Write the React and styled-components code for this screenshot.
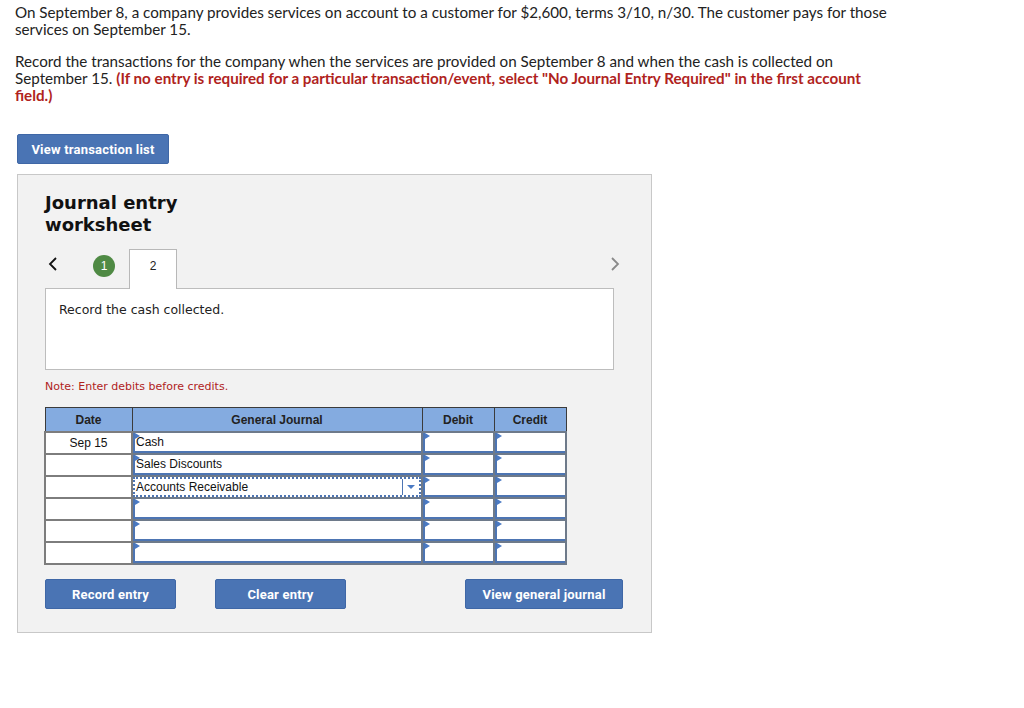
import React from 'react'
import styled, { createGlobalStyle } from 'styled-components'

const GlobalStyle = createGlobalStyle`
body {
    margin: 0;
    background: #fff;
}
`

const Page = styled.div`
padding: 4px 15px 40px 15px;
font-family: "Lato", "Liberation Sans", sans-serif;
color: #222;
`

const Intro = styled.p`
margin: 0 0 15px 0;
width: 880px;
font-size: 15.2px;
line-height: 17px;
`

const Warn = styled.strong`
color: #b0231d;
`

const BlueButton = styled.button`
height: 30px;
width: ${(props) => props.w}px;
padding: 0;
border: 1px solid #3f67a6;
border-radius: 2px;
background-color: #4a74b4;
color: #fff;
font-family: "Roboto", "Liberation Sans", sans-serif;
font-weight: 700;
font-size: 13px;
letter-spacing: 0.2px;
cursor: pointer;
`

const TopButton = styled(BlueButton)`
margin: 15px 0 0 2px;
`

const Panel = styled.div`
margin: 10px 0 0 2px;
width: 606px;
padding: 17px 0 23px 27px;
background: #f2f2f2;
border: 1px solid #c8c8c8;
`

const Title = styled.h2`
margin: 0 0 13px 0;
font-family: "DejaVu Sans", Verdana, sans-serif;
font-weight: 700;
font-size: 18px;
line-height: 22px;
color: #111;
`

const NavRow = styled.div`
display: flex;
align-items: flex-start;
width: 578px;
height: 39px;
`

const Arrow = styled.button`
border: none;
background: none;
padding: 0;
width: 16px;
height: 30px;
display: flex;
align-items: center;
justify-content: center;
cursor: pointer;
`

const Steps = styled.div`
flex: 1;
display: flex;
align-items: flex-start;
margin-left: 32px;
`

const StepDone = styled.div`
width: 22px;
height: 22px;
margin-top: 6px;
border-radius: 50%;
background: #4f8a44;
color: #fff;
font-family: "Liberation Sans", sans-serif;
font-size: 12px;
display: flex;
align-items: center;
justify-content: center;
`

const StepTab = styled.div`
margin-left: 14px;
width: 48px;
height: 40px;
background: #fff;
border: 1px solid #b8b8b8;
border-bottom: none;
font-family: "Liberation Sans", sans-serif;
font-size: 12px;
color: #222;
display: flex;
justify-content: center;
padding-top: 9px;
box-sizing: border-box;
position: relative;
z-index: 1;
`

const Prompt = styled.div`
width: 567px;
height: 80px;
box-sizing: content-box;
background: #fff;
border: 1px solid #bdbdbd;
padding: 0;
`

const PromptText = styled.p`
margin: 13px 0 0 13px;
font-family: "DejaVu Sans", Verdana, sans-serif;
font-size: 12.5px;
color: #222;
`

const Note = styled.p`
margin: 9px 0 12px 0;
font-family: "DejaVu Sans", Verdana, sans-serif;
font-size: 11px;
line-height: 16px;
color: #b0231d;
`

const Table = styled.table`
border-collapse: collapse;
margin-left: -1px;
font-family: "Liberation Sans", Arial, sans-serif;
font-size: 12px;
color: #111;
`

const Head = styled.th`
width: ${(props) => props.w}px;
height: 23px;
padding: 0;
background: #84abe0;
border: 1px solid #3b3b3b;
font-weight: 700;
font-size: 12px;
color: #222;
`

const DateCell = styled.td`
height: 20px;
padding: 0;
background: #fff;
border: 2px solid #7d7d7d;
text-align: center;
`

const FieldCell = styled.td`
height: 20px;
padding: 0;
border: 2px solid #6e7a8a;
background: #fff;
`

const Field = styled.div`
position: relative;
height: 18px;
display: flex;
align-items: center;
background: #fff;
border-left: 2px solid #4d75b3;
border-bottom: 2px solid #4d75b3;
padding-left: 1px;
${(props) => props.active && `
    border: 2px dotted #4d75b3;
    height: 16px;
`}
`

const Flag = styled.span`
position: absolute;
top: 0;
left: 0;
width: 0;
height: 0;
border-left: 5px solid #4a7ac4;
border-top: 3px solid transparent;
border-bottom: 3px solid transparent;
`

const FieldText = styled.span`
flex: 1;
`

const DropButton = styled.span`
width: 16px;
height: 16px;
border-left: 1px solid #4d75b3;
display: flex;
align-items: center;
justify-content: center;
&::after {
    content: "";
    border-top: 4px solid #4a7ac4;
    border-left: 4px solid transparent;
    border-right: 4px solid transparent;
}
`

const ButtonRow = styled.div`
display: flex;
margin-top: 14px;
`

const Chevron = ({ dir, color }) => (
    <svg width="10" height="14" viewBox="0 0 10 14">
        <path
            d={dir === 'left' ? 'M8 1 L2 7 L8 13' : 'M2 1 L8 7 L2 13'}
            fill="none"
            stroke={color}
            strokeWidth="1.8"
        />
    </svg>
)

const rows = [
    { date: 'Sep 15', account: 'Cash' },
    { date: '', account: 'Sales Discounts' },
    { date: '', account: 'Accounts Receivable', active: true },
    { date: '', account: '' },
    { date: '', account: '' },
    { date: '', account: '' },
]

const App = () => {
    return (
        <Page>
            <GlobalStyle />
            <Intro>
                On September 8, a company provides services on account to a customer for $2,600, terms 3/10, n/30. The customer pays for those services on September 15.
            </Intro>
            <Intro>
                Record the transactions for the company when the services are provided on September 8 and when the cash is collected on September 15. <Warn>(If no entry is required for a particular transaction/event, select "No Journal Entry Required" in the first account field.)</Warn>
            </Intro>

            <TopButton w={152}>View transaction list</TopButton>

            <Panel>
                <Title>Journal entry<br />worksheet</Title>

                <NavRow>
                    <Arrow><Chevron dir="left" color="#111" /></Arrow>
                    <Steps>
                        <StepDone>1</StepDone>
                        <StepTab>2</StepTab>
                    </Steps>
                    <Arrow><Chevron dir="right" color="#8a8a8a" /></Arrow>
                </NavRow>

                <Prompt>
                    <PromptText>Record the cash collected.</PromptText>
                </Prompt>

                <Note>Note: Enter debits before credits.</Note>

                <Table>
                    <thead>
                        <tr>
                            <Head w={86}>Date</Head>
                            <Head w={289}>General Journal</Head>
                            <Head w={71}>Debit</Head>
                            <Head w={71}>Credit</Head>
                        </tr>
                    </thead>
                    <tbody>
                        {rows.map((row, i) => (
                            <tr key={i}>
                                <DateCell>{row.date}</DateCell>
                                <FieldCell>
                                    <Field active={row.active}>
                                        {!row.active && <Flag />}
                                        <FieldText>{row.account}</FieldText>
                                        {row.active && <DropButton />}
                                    </Field>
                                </FieldCell>
                                <FieldCell>
                                    <Field><Flag /></Field>
                                </FieldCell>
                                <FieldCell>
                                    <Field><Flag /></Field>
                                </FieldCell>
                            </tr>
                        ))}
                    </tbody>
                </Table>

                <ButtonRow>
                    <BlueButton w={131}>Record entry</BlueButton>
                    <BlueButton w={131} style={{ marginLeft: 39 }}>Clear entry</BlueButton>
                    <BlueButton w={158} style={{ marginLeft: 119 }}>View general journal</BlueButton>
                </ButtonRow>
            </Panel>
        </Page>
    )
}

export default App
